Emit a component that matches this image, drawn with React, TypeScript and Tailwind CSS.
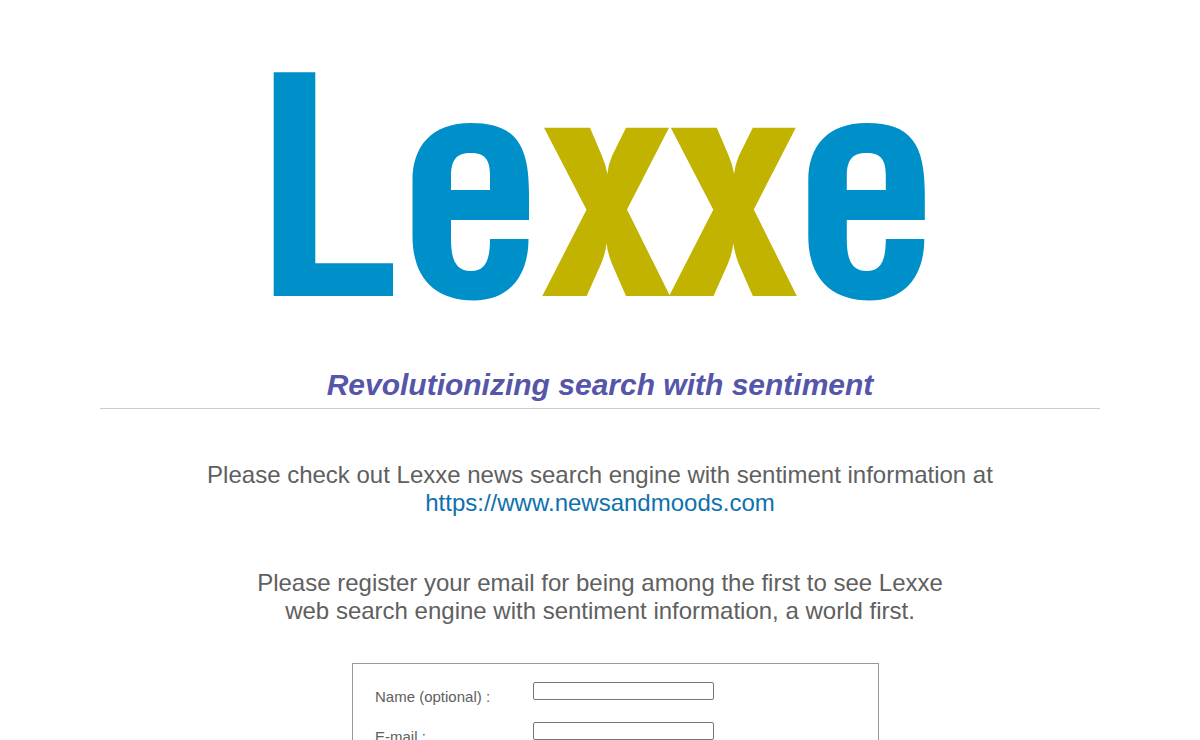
function LexxeLogo() {
  const round =
    "M529 220V193C529 144 515 123 471 123C431 123 412.500 147 412.500 180V236C412.500 276 433 300.500 474 300.500C509 300.500 528.500 276 528.500 239H490C490 261 485 271 471 271C456 271 451 260 451 239V220ZM451 190V177C451 160 456 153 471 153C485 153 490 160 490 175V190Z";
  const cross =
    "M544 127.800H590L602 156Q606 165 607.300 174Q608.500 164 612 156L626 127.800H669L627 209.500L670 296H626L612 264Q608 254 606.500 243.500Q605 255 601 264L586.700 296H542.300L586.500 209.700Z";

  return (
    <svg
      role="img"
      aria-label="Lexxe"
      viewBox="272 70 656 232"
      className="h-auto w-full max-w-[656px]"
    >
      <g fill="#0090c9" fillRule="evenodd">
        <path d="M273.700 72.300H315.300V263.300H393V296H273.700Z" />
        <path d={round} />
        <path d={round} transform="translate(395.800 0)" />
      </g>
      <g fill="#c1b300">
        <path d={cross} />
        <path d={cross} transform="translate(126.800 0)" />
      </g>
    </svg>
  );
}

function Field({ id, label, type }: { id: string; label: string; type: string }) {
  return (
    <div className="flex h-10 items-start">
      <label htmlFor={id} className="w-[158px] shrink-0 pt-1.5 text-[15px] leading-[18px]">
        {label}
      </label>
      <input
        id={id}
        name={id}
        type={type}
        className="h-[18px] w-[181px] rounded-xs border border-[#767676] bg-white px-0.5 text-[13px]"
      />
    </div>
  );
}

export default function App() {
  return (
    <main className="mx-auto max-w-[1000px] bg-white font-['Liberation_Sans',Arial,sans-serif] text-[#606060]">
      <header className="flex flex-col items-center border-b border-[#cccccc] pt-[70px] pb-[5px] text-center">
        <LexxeLogo />
        <h1 className="mt-[65px] text-[30px] leading-9 font-bold text-[#5555aa] italic">
          Revolutionizing search with sentiment
        </h1>
      </header>

      <section className="mt-[52px] text-center text-2xl leading-7">
        <p>
          Please check out Lexxe news search engine with sentiment information at
          <br />
          <a href="https://www.newsandmoods.com" className="text-[#0e71ad]">
            https://www.newsandmoods.com
          </a>
        </p>
        <p className="mx-auto mt-[52px] max-w-[700px]">
          Please register your email for being among the first to see Lexxe web search engine with
          sentiment information, a world first.
        </p>
      </section>

      <form className="mt-[38px] ml-[252px] max-w-[527px] border border-[#999999] px-[22px] pt-[18px] pb-4">
        <Field id="name" label="Name (optional) :" type="text" />
        <Field id="email" label="E-mail :" type="email" />
      </form>
    </main>
  );
}
